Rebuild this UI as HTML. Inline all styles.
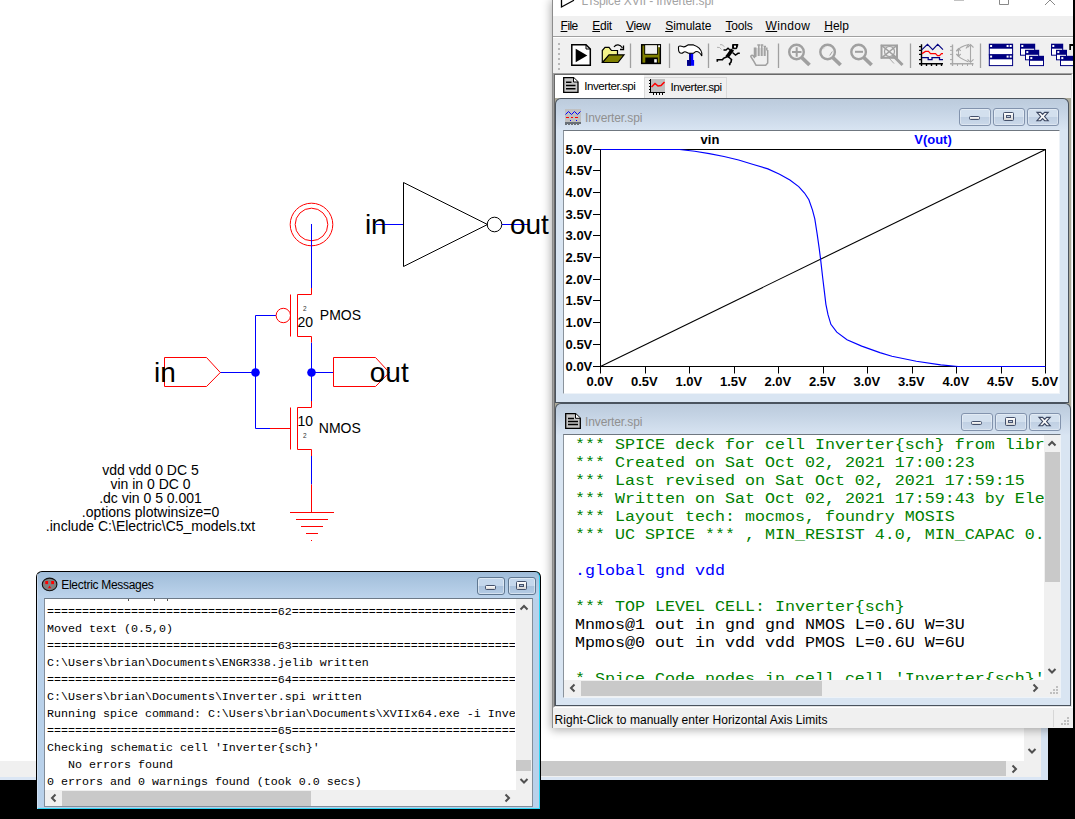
<!DOCTYPE html>
<html><head><meta charset="utf-8">
<style>
*{box-sizing:border-box;margin:0;padding:0}
html,body{width:1075px;height:819px;overflow:hidden;background:#000;font-family:"Liberation Sans",sans-serif}
.abs{position:absolute}
#elec{position:absolute;left:0;top:0;width:1048px;height:780px;background:#fff;overflow:hidden}
.mono{font-family:"Liberation Mono",monospace}
.wbtn{border:1px solid #5f7791;border-radius:3px;background:linear-gradient(#c4d7ec 0,#c4d7ec 48%,#a9c1dc 52%,#b4cbe4 100%);box-shadow:inset 0 0 0 1px rgba(255,255,255,.45)}
.wbtn i,.cbtn i{position:absolute;display:block;background:linear-gradient(#fff,#d6d6d6);border:1px solid #44506a;border-radius:1.5px}
.wbtn b{position:absolute;display:block;background:#a9bdd6;border:1px solid #44506a}
.cw{background:#4a535e;border-radius:6px 6px 0 0}
.cwin{position:absolute;left:1px;top:1px;right:1px;bottom:1px;border-radius:5px 5px 0 0;background:linear-gradient(#bccbdc 0px,#c3d2e3 10px,#d7e3f1 30px,#d9e5f2 31px)}
.cwt{left:30px;font-size:12px;line-height:16px;color:#909090;white-space:nowrap;letter-spacing:-0.12px}
.cbtn{width:32px;height:18px;border:1px solid #8293ad;border-radius:3px;background:linear-gradient(#d3e0ee 0,#d3e0ee 48%,#c0d0e3 52%,#cbd9ea 100%);box-shadow:inset 0 0 0 1px rgba(255,255,255,.35)}
.cbtn b{position:absolute;display:block;background:#c0cfe2;border:1px solid #4b5670}
</style></head><body>
<div id="elec">
  <div class="abs" style="left:0;top:761px;width:1041px;height:16px;background:#f0f0f0"></div>
  <div class="abs" style="left:300px;top:761px;width:706px;height:15px;background:#c9c9c9"></div>
  <div class="abs" style="left:0;top:777px;width:1048px;height:3px;background:#dbe6f4"></div>
  <div class="abs" style="left:1024px;top:700px;width:17px;height:77px;background:#f0f0f0"></div>
  <div class="abs" style="left:1041px;top:0;width:7px;height:780px;background:#d6e3f2"></div>
  <svg class="abs" style="left:1024px;top:743px" width="17" height="17"><path d="M4.5 6 L8 9.5 L11.5 6" stroke="#505050" stroke-width="2" fill="none"/></svg><svg class="abs" style="left:1006px;top:760.5px" width="17" height="17"><path d="M6.5 4.5 L10 8 L6.5 11.5" stroke="#505050" stroke-width="2" fill="none"/></svg>
  <svg class="abs" style="left:0;top:0" width="560" height="570">
  <g fill="none" stroke-width="1">
   <circle cx="311.5" cy="224.5" r="21.3" stroke="#f00"/>
   <circle cx="311.5" cy="224.5" r="16.3" stroke="#f00"/>
   <g stroke="#00f">
    <path d="M311.5 224 V288"/><path d="M311.5 342.5 V401"/><path d="M311.5 456 V484.5"/>
    <path d="M255.5 315.5 V428.5"/><path d="M255.5 315.5 H276"/><path d="M255.5 428.5 H270"/>
    <path d="M220 372.5 H255.5"/><path d="M311.5 372.5 H333.5"/>
    <path d="M376 224.5 H403.5"/><path d="M502 224.5 H528"/>
   </g>
   <g stroke="#f00">
    <path d="M311.5 288 V294.5 H297.5 V336.5 H311.5 V342.5"/><path d="M290.5 294.5 V336.5"/>
    <circle cx="283.3" cy="315.5" r="7.2"/>
    <path d="M311.5 401 V407.5 H297.5 V449.5 H311.5 V456"/><path d="M290.5 407.5 V449.5"/><path d="M270 428.5 H290.5"/>
    <path d="M164.5 357.5 H206.5 L220.3 372.5 L206.5 386.5 H164.5 Z"/>
    <path d="M333.5 357.5 H375.5 L389.3 372.5 L375.5 386.5 H333.5 Z"/>
    <path d="M311.5 484.5 V512.5"/><path d="M290 512.5 H334"/><path d="M296 519.5 H328"/><path d="M301 526.5 H323"/><path d="M306 533.5 H318"/><path d="M311 540.5 H312"/>
   </g>
   <path d="M403.5 182.5 V266.5 L487.5 224.5 Z" stroke="#000"/>
   <circle cx="494.5" cy="224.5" r="7.3" stroke="#000"/>
  </g>
  <circle cx="255.5" cy="372.5" r="4.3" fill="#00f"/>
  <circle cx="311.5" cy="372.5" r="4.3" fill="#00f"/>
  <g font-family="Liberation Sans" fill="#000">
   <text x="364.9" y="233.8" font-size="28">in</text>
   <text x="509.9" y="233.8" font-size="28">out</text>
   <text x="154" y="381.9" font-size="28">in</text>
   <text x="369.8" y="381.8" font-size="28">out</text>
   <text x="297.4" y="326.9" font-size="14">20</text>
   <text x="297.4" y="425.8" font-size="14">10</text>
   <text x="319.8" y="319.9" font-size="14">PMOS</text>
   <text x="318.8" y="432.8" font-size="14">NMOS</text>
   <text x="302.9" y="310.8" font-size="6.5" fill="#333">2</text>
   <text x="302.9" y="437.9" font-size="6.5" fill="#333">2</text>
   <g font-size="14" text-anchor="middle">
    <text x="150.5" y="474.5">vdd vdd 0 DC 5</text>
    <text x="150.5" y="488.6">vin in 0 DC 0</text>
    <text x="150.5" y="502.7">.dc vin 0 5 0.001</text>
    <text x="150.5" y="516.8">.options plotwinsize=0</text>
    <text x="150.5" y="530.9">.include C:\Electric\C5_models.txt</text>
   </g>
  </g>
</svg>
</div>
<div id="msg" class="abs" style="left:36px;top:571px;width:505px;height:239px;background:#000;border-radius:6px 6px 0 0;">
  <div class="abs" style="left:1px;top:1px;right:1px;bottom:1px;border-radius:5px 5px 0 0;background:linear-gradient(#9fbcd9 0px,#a9c4df 8px,#bdd4ec 26px,#b9d1ea 27px);border-right:1px solid #2fd5f5;border-bottom:1px solid #2fd5f5"></div>
  <div class="abs" style="left:1px;top:3px;width:1px;bottom:1px;background:#dfeaf6;opacity:.6"></div>
  <svg class="abs" style="left:5px;top:6px" width="18" height="16"><ellipse cx="8.6" cy="7.4" rx="7.3" ry="6.3" fill="#808080" stroke="#111" stroke-width="1.1"/><rect x="4.3" y="4" width="2.8" height="3.1" fill="#f00"/><rect x="10.2" y="4" width="2.8" height="3.1" fill="#f00"/><path d="M8.6 8.6 L10.3 11.2 H6.9 Z" fill="#f00"/></svg>
  <div class="abs" style="left:25.3px;top:6.5px;font-size:12px;line-height:15px;color:#000;white-space:nowrap;letter-spacing:-0.3px">Electric Messages</div>
  <div class="abs wbtn" style="left:440.5px;top:6px;width:28.5px;height:18px"><i style="left:7.5px;top:7.3px;width:10.6px;height:4.4px"></i></div>
  <div class="abs wbtn" style="left:471.5px;top:6px;width:28.5px;height:18px"><i style="left:7.7px;top:3px;width:10.6px;height:8.6px"></i><b style="left:10.5px;top:6px;width:5px;height:3px"></b></div>
  <div class="abs" style="left:8px;top:27px;width:489px;height:209px;background:#fff;border:1px solid #828d9a;border-top-color:#6d7a88;overflow:hidden">
    <pre class="mono abs" style="left:2px;top:5px;font-size:11.67px;line-height:16.95px;color:#000;width:468px;overflow:hidden;white-space:pre">=================================62====================================
Moved text (0.5,0)
=================================63====================================
C:\Users\brian\Documents\ENGR338.jelib written
=================================64====================================
C:\Users\brian\Documents\Inverter.spi written
Running spice command: C:\Users\brian\Documents\XVIIx64.exe -i Inverter.spi
=================================65====================================
Checking schematic cell 'Inverter{sch}'
   No errors found
0 errors and 0 warnings found (took 0.0 secs)</pre>
    <div class="abs" style="left:83px;top:0;width:1.3px;height:1.5px;background:#555"></div><div class="abs" style="left:109px;top:0;width:1.3px;height:1.5px;background:#555"></div><div class="abs" style="left:122px;top:0;width:1.3px;height:1.5px;background:#555"></div>
    <div class="abs" style="left:471px;top:0;width:17px;height:191px;background:#f0f0f0"></div>
    <div class="abs" style="left:471px;top:161px;width:15px;height:11px;background:#c9c9c9"></div>
    <svg class="abs" style="left:471px;top:0px" width="17" height="17"><path d="M4.5 10.5 L8 7 L11.5 10.5" stroke="#505050" stroke-width="2" fill="none"/></svg><svg class="abs" style="left:471px;top:174px" width="17" height="17"><path d="M4.5 6 L8 9.5 L11.5 6" stroke="#505050" stroke-width="2" fill="none"/></svg>
    <div class="abs" style="left:0;top:191px;width:488px;height:17px;background:#f0f0f0"></div>
    <div class="abs" style="left:17px;top:192px;width:249px;height:15px;background:#c9c9c9"></div>
    <svg class="abs" style="left:0px;top:191px" width="17" height="17"><path d="M10.5 4.5 L7 8 L10.5 11.5" stroke="#505050" stroke-width="2" fill="none"/></svg><svg class="abs" style="left:454px;top:191px" width="17" height="17"><path d="M6.5 4.5 L10 8 L6.5 11.5" stroke="#505050" stroke-width="2" fill="none"/></svg>
  </div>
</div>
<div id="lt" class="abs" style="left:552px;top:0;width:521px;height:728px;background:#f0f0f0;box-shadow:0 1px 9px 1px rgba(0,0,0,.33)">
 <div class="abs" style="left:0;top:0;width:1px;height:728px;background:#8c8c8c"></div>
 <div class="abs" style="left:1px;top:0;width:520px;height:16px;background:#fff"></div>
 <div class="abs" style="left:1px;top:16px;width:520px;height:20px;background:#f0f0f0;font-size:12px;line-height:17px;white-space:nowrap"><span class="abs" style="left:7.6px;top:2px;letter-spacing:-0.56px"><u>F</u>ile</span><span class="abs" style="left:39.3px;top:2px;letter-spacing:-0.30px"><u>E</u>dit</span><span class="abs" style="left:73.1px;top:2px;letter-spacing:-0.40px"><u>V</u>iew</span><span class="abs" style="left:112.2px;top:2px;letter-spacing:-0.07px"><u>S</u>imulate</span><span class="abs" style="left:172.5px;top:2px;letter-spacing:-0.20px"><u>T</u>ools</span><span class="abs" style="left:212.5px;top:2px;letter-spacing:0.35px"><u>W</u>indow</span><span class="abs" style="left:271.2px;top:2px;letter-spacing:0.03px"><u>H</u>elp</span></div>
 <div class="abs" style="left:1px;top:36px;width:520px;height:1px;background:#a0a0a0"></div>
 <div class="abs" style="left:1px;top:37px;width:520px;height:1px;background:#fff"></div>
 <div class="abs" style="left:1px;top:38px;width:520px;height:35px;background:#f0f0f0"></div>
 <!-- sunken MDI frame -->
 <div class="abs" style="left:1px;top:73px;width:520px;height:635px;background:#fff;border-left:1px solid #a0a0a0;border-top:1px solid #a0a0a0;border-right:1px solid #fff;border-bottom:1px solid #fff"></div>
 <div class="abs" style="left:2px;top:74px;width:518px;height:633px;background:#aba99a;border-left:1px solid #696969;border-top:1px solid #696969;border-right:1px solid #e3e3e3;border-bottom:1px solid #e3e3e3"></div>
 <div class="abs" style="left:3px;top:75px;width:516px;height:23px;background:#f0f0f0;font-size:11.6px;line-height:14px;white-space:nowrap;letter-spacing:-0.47px">
  <div class="abs" style="left:0;top:0;width:89px;height:23px;background:#fff"></div>
  <div class="abs" style="left:89px;top:2px;width:83px;height:21px;border:1px solid #dadada;border-bottom:none"></div>
  <svg class="abs" style="left:8px;top:2px" width="17" height="17"><path d="M0.7 0.7 H10.5 L15 5 V15.3 H0.7 Z" fill="#c8c8c8" stroke="#000" stroke-width="1.3"/><path d="M10.5 0.7 V5 H15" fill="#fff" stroke="#000" stroke-width="1"/><path d="M3 5.3 H8.5 M3 8.5 H12.5 M3 11.7 H12.5" stroke="#000" stroke-width="1.5"/></svg><span class="abs" style="left:29.3px;top:3.8px">Inverter.spi</span><svg class="abs" style="left:94px;top:4px" width="17" height="17"><rect x="2" y="0" width="14" height="13" fill="#c0c0c0"/><path d="M2.5 8 L6 4.5 L9 7 L12 6.5 L15.5 3" fill="none" stroke="#f00" stroke-width="1.5"/><path d="M1.5 0 V14 M0 13.5 H16" stroke="#000" stroke-width="1"/><path d="M0 1.5 h2 M0 4.5 h2 M0 7.5 h2 M0 10.5 h2 M4.5 14 v2 M7.5 14 v2 M10.5 14 v2 M13.5 14 v2" stroke="#000" stroke-width="1"/></svg><span class="abs" style="left:115.5px;top:5.4px">Inverter.spi</span>
 </div>
 <div class="abs cw" style="left:3px;top:98px;width:514px;height:305px">
  <div class="cwin"></div><svg class="abs" style="left:10px;top:10px" width="18" height="18"><rect x="0" y="1" width="16" height="13" fill="#c0c0c0"/><path d="M0.5 6.5 L3.5 3.5 L6.5 6.5 L9.5 3.5 L12.5 6.5 L15.5 3.5" stroke="#00f" fill="none"/><path d="M1 9.5 h3 M6 9.5 h2 M10 9.5 h3" stroke="#f00"/><path d="M5 12.5 h1 M11 12.5 h1" stroke="#00f"/><path d="M0 15 h16" stroke="#000"/><path d="M1 16 v1 M4 16 v1 M7 16 v1 M10 16 v1 M13 16 v1" stroke="#000"/></svg>
  <div class="abs cwt" style="top:11.5px">Inverter.spi</div>
  <div class="abs cbtn" style="left:404px;top:10px"><i style="left:8.7px;top:6.5px;width:11px;height:4.6px"></i></div>
  <div class="abs cbtn" style="left:438px;top:10px"><i style="left:8.8px;top:2.8px;width:10.8px;height:8.8px"></i><b style="left:11.8px;top:5.8px;width:5px;height:3px"></b></div>
  <div class="abs cbtn" style="left:472px;top:10px"><svg width="31" height="17" style="position:absolute;left:0;top:0"><path d="M9 3.3 h3.6 l2 2.1 l2 -2.1 h3.6 l-3.6 4.2 l3.6 4.2 h-3.6 l-2 -2.1 l-2 2.1 h-3.6 l3.6 -4.2 z" fill="#fafafa" stroke="#3b4660" stroke-width="1.15"/></svg></div>
  <div class="abs" style="left:8px;top:32px;width:497px;height:264px;background:#fff;border-left:1px solid #8a939c;border-top:1px solid #6f7780;border-right:1px solid #eef3f8;border-bottom:1px solid #eef3f8"></div><svg class="abs" style="left:-555px;top:-98px" width="1075" height="400" font-family="Liberation Sans" font-weight="bold" font-size="13" fill="#000">
 <rect x="600.5" y="149.5" width="445" height="217" fill="none" stroke="#000"/><text x="592.3" y="154.0" text-anchor="end">5.0V</text><path d="M593 149.5 H600.5" stroke="#000"/><text x="592.3" y="175.0" text-anchor="end">4.5V</text><path d="M593 170.5 H600.5" stroke="#000"/><text x="592.3" y="197.0" text-anchor="end">4.0V</text><path d="M593 192.5 H600.5" stroke="#000"/><text x="592.3" y="219.0" text-anchor="end">3.5V</text><path d="M593 214.5 H600.5" stroke="#000"/><text x="592.3" y="240.0" text-anchor="end">3.0V</text><path d="M593 235.5 H600.5" stroke="#000"/><text x="592.3" y="262.0" text-anchor="end">2.5V</text><path d="M593 257.5 H600.5" stroke="#000"/><text x="592.3" y="284.0" text-anchor="end">2.0V</text><path d="M593 279.5 H600.5" stroke="#000"/><text x="592.3" y="305.0" text-anchor="end">1.5V</text><path d="M593 300.5 H600.5" stroke="#000"/><text x="592.3" y="327.0" text-anchor="end">1.0V</text><path d="M593 322.5 H600.5" stroke="#000"/><text x="592.3" y="349.0" text-anchor="end">0.5V</text><path d="M593 344.5 H600.5" stroke="#000"/><text x="592.3" y="371.0" text-anchor="end">0.0V</text><path d="M593 366.5 H600.5" stroke="#000"/><text x="599.8" y="386.3" text-anchor="middle">0.0V</text><path d="M600.5 366.5 V373.5" stroke="#000"/><text x="644.3" y="386.3" text-anchor="middle">0.5V</text><path d="M645.5 366.5 V373.5" stroke="#000"/><text x="688.8" y="386.3" text-anchor="middle">1.0V</text><path d="M689.5 366.5 V373.5" stroke="#000"/><text x="733.3" y="386.3" text-anchor="middle">1.5V</text><path d="M734.5 366.5 V373.5" stroke="#000"/><text x="777.8" y="386.3" text-anchor="middle">2.0V</text><path d="M778.5 366.5 V373.5" stroke="#000"/><text x="822.3" y="386.3" text-anchor="middle">2.5V</text><path d="M823.5 366.5 V373.5" stroke="#000"/><text x="866.8" y="386.3" text-anchor="middle">3.0V</text><path d="M867.5 366.5 V373.5" stroke="#000"/><text x="911.3" y="386.3" text-anchor="middle">3.5V</text><path d="M912.5 366.5 V373.5" stroke="#000"/><text x="955.8" y="386.3" text-anchor="middle">4.0V</text><path d="M956.5 366.5 V373.5" stroke="#000"/><text x="1000.3" y="386.3" text-anchor="middle">4.5V</text><path d="M1001.5 366.5 V373.5" stroke="#000"/><text x="1044.8" y="386.3" text-anchor="middle">5.0V</text><path d="M1045.5 366.5 V373.5" stroke="#000"/>
 <path d="M600.5 366.5 L1045.5 149.5" stroke="#000" fill="none" stroke-width="1.1"/>
 <path d="M600.5 149.5 L679.5 149.5 L694.7 151.2 L709.3 153.6 L724.0 156.5 L738.6 160.0 L753.3 164.5 L767.9 168.9 L779.6 174.2 L789.9 180.0 L798.7 186.6 L804.5 193.0 L808.9 199.8 L812.5 210.1 L814.8 218.9 L817.1 233.7 L819.2 248.4 L820.7 260.1 L822.7 277.8 L824.5 292.6 L825.9 304.3 L828.0 314.7 L830.9 324.3 L836.8 332.2 L847.0 339.7 L861.7 346.1 L879.9 352.6 L891.9 356.3 L916.3 361.3 L940.7 364.9 L958.0 366.5 L1045.5 366.5" stroke="#0000ff" fill="none" stroke-width="1.15"/>
 <text x="710" y="143.8" text-anchor="middle">vin</text>
 <text x="933" y="143.8" text-anchor="middle" fill="#0000ff">V(out)</text>
</svg>
</div><div class="abs cw" style="left:3px;top:403px;width:516px;height:303px">
  <div class="cwin"></div><svg class="abs" style="left:10px;top:10px" width="18" height="18"><path d="M0.7 0.7 H10.5 L15.3 5.3 V15.3 H0.7 Z" fill="#c6c6c6" stroke="#000" stroke-width="1.3"/><path d="M10.5 0.7 V5.3 H15.3" fill="#fff" stroke="#000" stroke-width="1"/><path d="M3 5.5 H9 M3 8.5 H13 M3 11.5 H13" stroke="#000" stroke-width="1.5"/></svg>
  <div class="abs cwt" style="top:11px">Inverter.spi</div>
  <div class="abs cbtn" style="left:406px;top:10px"><i style="left:8.7px;top:6.5px;width:11px;height:4.6px"></i></div>
  <div class="abs cbtn" style="left:440px;top:10px"><i style="left:8.8px;top:2.8px;width:10.8px;height:8.8px"></i><b style="left:11.8px;top:5.8px;width:5px;height:3px"></b></div>
  <div class="abs cbtn" style="left:474px;top:10px"><svg width="31" height="17" style="position:absolute;left:0;top:0"><path d="M9 3.3 h3.6 l2 2.1 l2 -2.1 h3.6 l-3.6 4.2 l3.6 4.2 h-3.6 l-2 -2.1 l-2 2.1 h-3.6 l3.6 -4.2 z" fill="#fafafa" stroke="#3b4660" stroke-width="1.15"/></svg></div>
  <div class="abs" style="left:8px;top:31px;width:498px;height:264px;background:#fff;border-left:1px solid #8a939c;border-top:1px solid #6f7780;border-right:1px solid #eef3f8;border-bottom:1px solid #eef3f8;overflow:hidden">
   <div class="mono abs" style="left:11px;top:0;width:470px;height:245px;overflow:hidden;font-size:16.67px"><div style="position:absolute;left:0;top:1.40px;height:22px;line-height:22px;color:#008000;transform:scaleY(.87);transform-origin:0 0;white-space:pre">*** SPICE deck for cell Inverter{sch} from library ENGR338</div><div style="position:absolute;left:0;top:19.40px;height:22px;line-height:22px;color:#008000;transform:scaleY(.87);transform-origin:0 0;white-space:pre">*** Created on Sat Oct 02, 2021 17:00:23</div><div style="position:absolute;left:0;top:37.40px;height:22px;line-height:22px;color:#008000;transform:scaleY(.87);transform-origin:0 0;white-space:pre">*** Last revised on Sat Oct 02, 2021 17:59:15</div><div style="position:absolute;left:0;top:55.40px;height:22px;line-height:22px;color:#008000;transform:scaleY(.87);transform-origin:0 0;white-space:pre">*** Written on Sat Oct 02, 2021 17:59:43 by Electric VLSI Design System</div><div style="position:absolute;left:0;top:73.40px;height:22px;line-height:22px;color:#008000;transform:scaleY(.87);transform-origin:0 0;white-space:pre">*** Layout tech: mocmos, foundry MOSIS</div><div style="position:absolute;left:0;top:91.40px;height:22px;line-height:22px;color:#008000;transform:scaleY(.87);transform-origin:0 0;white-space:pre">*** UC SPICE *** , MIN_RESIST 4.0, MIN_CAPAC 0.1FF</div><div style="position:absolute;left:0;top:127.40px;height:22px;line-height:22px;color:#0000ff;transform:scaleY(.87);transform-origin:0 0;white-space:pre">.global gnd vdd</div><div style="position:absolute;left:0;top:163.40px;height:22px;line-height:22px;color:#008000;transform:scaleY(.87);transform-origin:0 0;white-space:pre">*** TOP LEVEL CELL: Inverter{sch}</div><div style="position:absolute;left:0;top:181.40px;height:22px;line-height:22px;color:#000;transform:scaleY(.87);transform-origin:0 0;white-space:pre">Mnmos@1 out in gnd gnd NMOS L=0.6U W=3U</div><div style="position:absolute;left:0;top:199.40px;height:22px;line-height:22px;color:#000;transform:scaleY(.87);transform-origin:0 0;white-space:pre">Mpmos@0 out in vdd vdd PMOS L=0.6U W=6U</div><div style="position:absolute;left:0;top:235.40px;height:22px;line-height:22px;color:#008000;transform:scaleY(.87);transform-origin:0 0;white-space:pre">* Spice Code nodes in cell cell 'Inverter{sch}'</div></div>
   <div class="abs" style="left:480px;top:0;width:17px;height:245px;background:#f0f0f0"></div>
   <div class="abs" style="left:481px;top:17px;width:15px;height:130px;background:#c9c9c9"></div>
   <svg class="abs" style="left:480px;top:0px" width="17" height="17"><path d="M4.5 10.5 L8 7 L11.5 10.5" stroke="#505050" stroke-width="2" fill="none"/></svg><svg class="abs" style="left:480px;top:228px" width="17" height="17"><path d="M4.5 6 L8 9.5 L11.5 6" stroke="#505050" stroke-width="2" fill="none"/></svg>
   <div class="abs" style="left:0;top:245px;width:497px;height:17px;background:#f0f0f0"></div>
   <div class="abs" style="left:17px;top:246px;width:241px;height:15px;background:#c9c9c9"></div>
   <svg class="abs" style="left:0px;top:245px" width="17" height="17"><path d="M10.5 4.5 L7 8 L10.5 11.5" stroke="#505050" stroke-width="2" fill="none"/></svg><svg class="abs" style="left:463px;top:245px" width="17" height="17"><path d="M6.5 4.5 L10 8 L6.5 11.5" stroke="#505050" stroke-width="2" fill="none"/></svg><svg class="abs" style="left:483px;top:248px" width="14" height="14"><g fill="#bfbfbf"><rect x="9" y="3" width="2" height="2"/><rect x="6" y="6" width="2" height="2"/><rect x="9" y="6" width="2" height="2"/><rect x="3" y="9" width="2" height="2"/><rect x="6" y="9" width="2" height="2"/><rect x="9" y="9" width="2" height="2"/></g></svg>
  </div>
</div><div class="abs" style="left:0;top:0;width:521px;height:100px;overflow:hidden"><svg class="abs" style="left:-552px;top:0" width="1075" height="100">
 <path d="M561.5 0 V7 L574 0.3" fill="none" stroke="#000" stroke-width="1.3"/>
 <path d="M954 0 H964" stroke="#999" stroke-width="1.2"/>
 <path d="M999.5 0 V4.5 H1008.5 V0" fill="none" stroke="#888" stroke-width="1"/>
 <path d="M1045 5 L1050 0 L1055 5" fill="none" stroke="#888" stroke-width="1"/>
 <g fill="#b8b8b8"><rect x="558" y="43.0" width="2" height="2"/><rect x="558" y="48.0" width="2" height="2"/><rect x="558" y="53.0" width="2" height="2"/><rect x="558" y="58.0" width="2" height="2"/><rect x="558" y="63.0" width="2" height="2"/><rect x="558" y="68.0" width="2" height="2"/></g>
 <path d="M571.8 44.8 H586 L590.3 49 V65.2 H571.8 Z" fill="#fff" stroke="#000" stroke-width="1.5"/>
 <path d="M586 44.8 V49 H590.3" fill="none" stroke="#000" stroke-width="1"/>
 <path d="M575.7 48.8 L587.3 55.6 L575.7 62.3 Z" fill="#000"/>
 <path d="M602.3 62.5 V50.5 L605 47.3 H609 L611.5 50.5 H617.5 V55" fill="#f4f48a" stroke="#000" stroke-width="1.2"/>
 <path d="M602.5 62.5 L609 54.8 H624 L618 62.5 Z" fill="#808000" stroke="#000" stroke-width="1.2"/>
 <path d="M614 47 C616 44, 620 44, 622.5 48" fill="none" stroke="#000" stroke-width="1.2"/>
 <path d="M620 49.5 H623.5 V45.5" fill="none" stroke="#000" stroke-width="1.3"/>
 <path d="M630.5 43.5 V68" stroke="#a0a0a0" stroke-width="1.3"/>
 <rect x="641.7" y="44.8" width="18.6" height="18.6" fill="#808000" stroke="#000" stroke-width="1.5"/>
 <rect x="645" y="45.2" width="12.3" height="8.8" fill="#f0f0f0"/>
 <path d="M644.7 45 V54.3 H657.6 V45" fill="none" stroke="#000" stroke-width="0.9"/>
 <rect x="645.3" y="57.5" width="12.6" height="5.6" fill="#000"/>
 <rect x="654.2" y="59.2" width="2.6" height="3.3" fill="#fff"/>
 <rect x="658.2" y="45.3" width="1.8" height="1.9" fill="#fff"/>
 <path d="M669.5 43.5 V68" stroke="#a0a0a0" stroke-width="1.3"/>
 <path d="M689.2 53 H693.2 V60 H694.1 V65.7 H687.1 V60 H689.2 Z" fill="#0000ff"/>
 <path d="M689.2 53 H691 V65.7 H687.1 V60 H689.2 Z" fill="#000080"/>
 <path d="M678.5 47 C678.5 45.5 681 45.8 682.5 46.6 C684.5 47.8 686 46 688 44.9 H693.5 C697 46 701 49 701.8 53 V56 C700.5 53.5 698.5 51.5 696.5 51.5 C695.2 51.5 694.5 52.5 693.5 53.2 H688.5 C687 52.5 686 51.8 684.8 51.8 C683.5 51.8 683 53.2 681.5 53.2 C679.5 53.2 678.5 51 678.5 49 Z" fill="#fff" stroke="#000" stroke-width="1.1"/>
 <path d="M708.5 43.5 V68" stroke="#a0a0a0" stroke-width="1.3"/>
 <g stroke="#000" fill="none">
  <path d="M732.6 44.5 H738 L736.6 48.7 H732.6 Z" stroke-width="1" fill="#000"/><rect x="734" y="45.6" width="2" height="2" fill="#fff" stroke="none"/>
  <path d="M732.5 49.5 L727 57" stroke-width="3.8"/>
  <path d="M730.5 50.5 L728 48.3 L726 50 H723.5" stroke-width="1.5"/>
  <path d="M732.5 52.5 L735.5 55 L738 53.3 H739.8" stroke-width="1.5"/>
  <path d="M727.5 56.5 L723.5 58.3 L722.5 59.7 H717.3 V61.8" stroke-width="1.6"/>
  <path d="M728.5 57 L731.5 59.5 L731 62.2 L729.5 63.8 L730 65.3" stroke-width="1.6"/>
  <path d="M720 44.7 L722 44.7 L724.5 46.7" stroke="#a8a8a8" stroke-width="0.9"/>
  <path d="M717 47.3 L719.5 47.5 L721.5 49.5" stroke="#a8a8a8" stroke-width="0.9"/>
 </g>
 <g stroke="#a0a0a0" fill="none" stroke-width="1.5">
  <path d="M754.5 48 H766 V56 H754.5 Z" fill="#d8d8d8" stroke="none"/>
  <path d="M755.7 57 V47.6 M758.8 56 V45.2 M761.8 56 V45.2 M764.8 56 V47"/>
  <path d="M754.5 47.5 V58 M757.3 44.9 H760 M760.5 44.9 H763.3 M763.6 46.5 H766 M766.8 47.5 V50.5 M767.7 50 V63 L765.7 65.2 H756 L753.3 60.5 L751 57 C750.3 55.4 752.2 54.6 753.2 55.8 L754.8 58"/>
 </g>
 <path d="M778.5 43.5 V68" stroke="#a0a0a0" stroke-width="1.3"/><g fill="none" stroke="#a0a0a0"><circle cx="796.5" cy="52" r="7.3" stroke-width="2.4"/><path d="M801.7 57.5 L809.5 65" stroke-width="3.8"/><path d="M792 52 H801.5 M796.7 47.3 V56.7" stroke-width="2"/></g><g fill="none" stroke="#a0a0a0"><circle cx="827.6" cy="52" r="7.3" stroke-width="2.4"/><path d="M832.8 57.5 L840.6 65" stroke-width="3.8"/><path d="M829.7 55.5 L832.3 51.5" stroke-width="1"/><path d="M823 49.3 L825 47.3" stroke-width="0.8" stroke="#c8c8c8"/></g><g fill="none" stroke="#a0a0a0"><circle cx="858.6" cy="52" r="7.3" stroke-width="2.4"/><path d="M863.8 57.5 L871.6 65" stroke-width="3.8"/><path d="M855 51.8 H863" stroke-width="2"/></g>
 <g fill="none" stroke="#a0a0a0"><rect x="881.5" y="45.5" width="15.5" height="12.3" stroke-width="2"/><path d="M881 45 L897.5 58.3 M897.5 45 L881 58.3" stroke-width="1.5"/><circle cx="889.5" cy="51.5" r="5" stroke-width="1.2"/><path d="M893 55.5 L902.5 65" stroke-width="3"/><path d="M889 58 L894 63.5" stroke-width="0.9"/></g>
 <path d="M910.5 43.5 V68" stroke="#a0a0a0" stroke-width="1.3"/>
 <g fill="none">
  <path d="M921.5 44.3 V66 M919 63.8 H943" stroke="#000" stroke-width="1.4"/>
  <path d="M919 46.6 H921 M919 50.3 H921 M919 54.4 H921 M919 59.6 H921" stroke="#000" stroke-width="1.2"/>
  <path d="M926.5 64 V66 M931.5 64 V66 M936.5 64 V66 M941.5 64 V66" stroke="#000" stroke-width="1.4"/>
  <path d="M922 49.7 L927.5 44.3 L932.7 49.7 L937.7 44.3 L943 49.7" stroke="#000080" stroke-width="1.1"/>
  <path d="M922 53.6 L925.5 51.4 H928.5 L930.5 53.6 H935.5 L937.5 55.6 H939.5 L941.5 53.6 H943" stroke="#ff0000" stroke-width="1.25"/>
  <path d="M922 57.7 H928.2 V59.6 H932 V57.7 H939.5 V59.6 H943" stroke="#000080" stroke-width="1.3"/>
 </g>
 <g fill="none" stroke="#a8a8a8" stroke-width="1.1">
  <path d="M952.5 44.5 V66 M950 63.8 H973.5" stroke-width="1.4"/>
  <path d="M950 46.6 H952 M950 50.3 H952 M950 54.4 H952 M950 59.6 H952 M957.5 64 V66 M962.5 64 V66 M967.5 64 V66 M972.5 64 V66" stroke-width="1"/>
  <path d="M956.5 51.5 C959 47.5 964 45.5 968.5 44.5 L966 48.5 M956.5 54 C959 58 964 60 968.5 62"/>
  <path d="M970.5 44.8 V62 M967.5 47.5 L970.5 44.5 L973.5 47.5 M967.5 59.3 L970.5 62.3 L973.5 59.3"/>
  <path d="M958.5 48.8 V56 M956.3 50.8 L958.5 48.5 L960.7 50.8 M956.3 54 L958.5 56.3 L960.7 54"/>
 </g>
 <path d="M980.5 43.5 V68" stroke="#a0a0a0" stroke-width="1.3"/><rect x="988.8" y="43.7" width="24.3" height="11.6" fill="#000080"/><rect x="989.8" y="48.7" width="22.3" height="5.6" fill="#fff"/><rect x="990.1" y="45.0" width="2" height="2" fill="#fff"/><rect x="1006.6" y="45.0" width="2" height="2" fill="#fff"/><rect x="1009.7" y="45.0" width="2" height="2" fill="#fff"/><rect x="988.8" y="54.3" width="24.3" height="11.8" fill="#000080"/><rect x="989.8" y="59.3" width="22.3" height="5.8" fill="#fff"/><rect x="990.1" y="55.6" width="2" height="2" fill="#fff"/><rect x="1006.6" y="55.6" width="2" height="2" fill="#fff"/><rect x="1009.7" y="55.6" width="2" height="2" fill="#fff"/><rect x="1020.0" y="43.7" width="15.2" height="12.0" fill="#000080"/><rect x="1021.0" y="48.7" width="13.2" height="6.0" fill="#fff"/><rect x="1021.3" y="45.0" width="2" height="2" fill="#fff"/><rect x="1025.0" y="49.8" width="14.2" height="10.5" fill="#000080"/><rect x="1026.0" y="54.8" width="12.2" height="4.5" fill="#fff"/><rect x="1026.3" y="51.1" width="2" height="2" fill="#fff"/><rect x="1029.0" y="55.8" width="15.0" height="10.3" fill="#000080"/><rect x="1030.0" y="60.8" width="13.0" height="4.3" fill="#fff"/><rect x="1030.3" y="57.1" width="2" height="2" fill="#fff"/><rect x="1051.0" y="43.7" width="12.2" height="12.0" fill="#000080"/><rect x="1052.0" y="48.7" width="10.2" height="6.0" fill="#fff"/><rect x="1052.3" y="45.0" width="2" height="2" fill="#fff"/><rect x="1056.0" y="49.8" width="11.0" height="10.5" fill="#000080"/><rect x="1057.0" y="54.8" width="9.0" height="4.5" fill="#fff"/><rect x="1057.3" y="51.1" width="2" height="2" fill="#fff"/><rect x="1060.0" y="55.8" width="14.0" height="10.3" fill="#000080"/><rect x="1061.0" y="60.8" width="12.0" height="4.3" fill="#fff"/><rect x="1061.3" y="57.1" width="2" height="2" fill="#fff"/>
 <path d="M1069.3 44 H1073 V46 H1071 V50 H1069.3 Z" fill="#000"/>
</svg></div><div class="abs" style="left:29.6px;top:-6.3px;font-size:12px;line-height:15px;color:#a3a3a3;white-space:nowrap;letter-spacing:-0.12px">LTspice XVII - Inverter.spi</div>
 <div class="abs" style="left:1px;top:708px;width:520px;height:20px;background:#f0f0f0"></div>
 <div class="abs" style="left:2.6px;top:711.6px;font-size:12px;line-height:16px;white-space:nowrap;color:#000;letter-spacing:0.04px">Right-Click to manually enter Horizontal Axis Limits</div>
 <div class="abs" style="left:501px;top:710px;width:1px;height:17px;background:#d7d7d7"></div>
 <svg class="abs" style="left:506px;top:714px" width="14" height="14"><g fill="#bfbfbf"><rect x="9" y="3" width="2" height="2"/><rect x="6" y="6" width="2" height="2"/><rect x="9" y="6" width="2" height="2"/><rect x="3" y="9" width="2" height="2"/><rect x="6" y="9" width="2" height="2"/><rect x="9" y="9" width="2" height="2"/></g></svg>
</div>
</body></html>
